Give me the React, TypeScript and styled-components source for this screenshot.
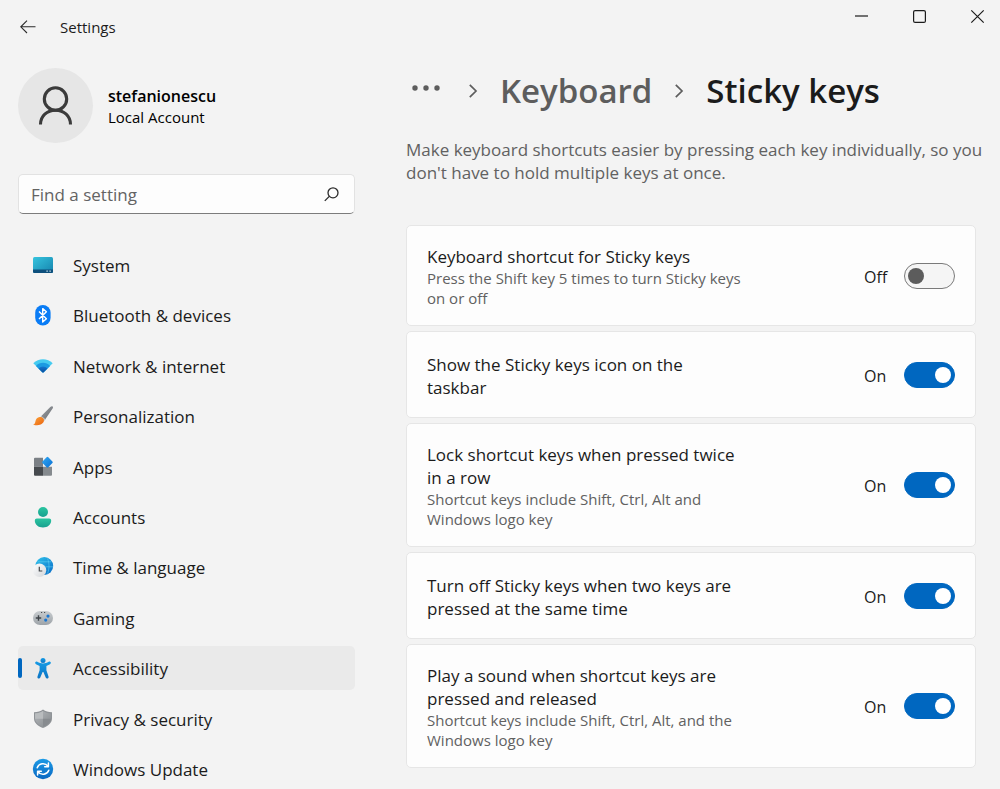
import React from 'react';
import styled, { createGlobalStyle } from 'styled-components';

const GlobalStyle = createGlobalStyle`
  *, *::before, *::after { box-sizing: border-box; }
  body {
    margin: 0;
    background: #f3f3f3;
    color: #1b1b1b;
    font-family: "Open Sans", "Noto Sans", sans-serif;
    font-size: 17px;
  }
  button, input { font: inherit; color: inherit; }
`;

const Window = styled.div`
  display: flex;
  flex-direction: column;
  height: 100vh;
  overflow: hidden;
`;

const TitleBar = styled.header`
  display: flex;
  justify-content: space-between;
  height: 56px;
  flex: none;
`;

const TitleGroup = styled.div`
  display: flex;
  align-items: center;
  gap: 16px;
  height: 54px;
  padding-left: 12px;
`;

const AppTitle = styled.span`
  font-size: 15px;
  line-height: 20px;
`;

const IconButton = styled.button<{ $width: number; $height: number }>`
  display: flex;
  align-items: center;
  justify-content: center;
  width: ${(p) => p.$width}px;
  height: ${(p) => p.$height}px;
  padding: 0;
  border: 0;
  border-radius: 4px;
  background: transparent;
`;

const WindowControls = styled.div`
  display: flex;
  margin-right: -6px;
`;

const Body = styled.div`
  display: grid;
  grid-template-columns: 337px minmax(0, 1fr);
  column-gap: 51px;
  flex: 1;
  min-height: 0;
  padding: 0 8px 0 18px;
`;

const Column = styled.div`
  overflow-y: auto;
  scrollbar-width: none;
`;

const Profile = styled.div`
  display: flex;
  align-items: center;
  gap: 15px;
  margin-top: 12px;
`;

const Avatar = styled.div`
  display: flex;
  align-items: center;
  justify-content: center;
  width: 75px;
  height: 75px;
  border-radius: 50%;
  background: #e6e6e6;
`;

const UserName = styled.div`
  color: #000;
  font-size: 16px;
  font-weight: 600;
  line-height: 22px;
`;

const UserKind = styled.div`
  color: #000;
  font-size: 15px;
  line-height: 20px;
`;

const SearchBox = styled.label`
  display: flex;
  align-items: center;
  height: 40px;
  margin-top: 31px;
  padding: 0 15px 0 12px;
  border: 1px solid #e2e2e2;
  border-bottom-color: #7c7c7c;
  border-radius: 5px;
  background: #fdfdfd;
`;

const SearchInput = styled.input`
  flex: 1;
  min-width: 0;
  padding: 2px 0 0;
  border: 0;
  outline: 0;
  background: transparent;
  line-height: 24px;
  &::placeholder { color: #636363; opacity: 1; }
`;

const NavList = styled.ul`
  display: flex;
  flex-direction: column;
  justify-content: space-between;
  min-height: 548px;
  margin: 29px 0 0;
  padding: 0;
  list-style: none;
`;

const NavLink = styled.a<{ $active?: boolean }>`
  position: relative;
  display: flex;
  align-items: center;
  gap: 20px;
  height: 44px;
  padding: 2px 0 0 15px;
  border-radius: 5px;
  background: ${(p) => (p.$active ? '#eaeaea' : 'transparent')};
  color: #1b1b1b;
  line-height: 24px;
  text-decoration: none;
  &::before {
    content: "";
    display: ${(p) => (p.$active ? 'block' : 'none')};
    position: absolute;
    left: 0;
    top: 12px;
    width: 4px;
    height: 20px;
    border-radius: 2px;
    background: #0067c0;
  }
`;

const Breadcrumb = styled.nav`
  display: flex;
  align-items: center;
  height: 48px;
  margin-top: 11px;
  font-size: 33px;
  font-weight: 600;
  line-height: 48px;
  white-space: nowrap;
`;

const CrumbLink = styled.a`
  color: #5d5d5d;
  text-decoration: none;
`;

const PageTitle = styled.h1`
  margin: 0;
  font-size: inherit;
  font-weight: inherit;
`;

const Separator = styled.span`
  display: flex;
  align-items: center;
  justify-content: center;
  width: 54px;
`;

const Intro = styled.p`
  margin: 23px 0 0;
  color: #616161;
  line-height: 23px;
`;

const Cards = styled.div`
  display: flex;
  flex-direction: column;
  gap: 5px;
  margin: 41px 16px 0 0;
  padding-bottom: 20px;
`;

const Card = styled.div`
  display: flex;
  align-items: center;
  justify-content: space-between;
  min-height: 87px;
  padding: 0 20px;
  border: 1px solid #e6e6e6;
  border-radius: 5px;
  background: #fdfdfd;
`;

const CardText = styled.label`
  display: block;
  max-width: 316px;
  padding: 19px 0 17px;
`;

const CardTitle = styled.span`
  display: block;
  line-height: 23px;
`;

const CardNote = styled.span`
  display: block;
  color: #616161;
  font-size: 15px;
  line-height: 20px;
`;

const Control = styled.div`
  display: flex;
  align-items: center;
`;

const State = styled.span`
  width: 40px;
  padding-top: 2px;
  font-size: 16px;
  line-height: 24px;
`;

const Switch = styled.input`
  appearance: none;
  display: flex;
  align-items: center;
  width: 51px;
  height: 26px;
  margin: 0;
  padding: 0 3px;
  border: 1px solid #7a7a7a;
  border-radius: 13px;
  background: #f5f5f5;
  &::before {
    content: "";
    width: 16px;
    height: 16px;
    border-radius: 50%;
    background: #5c5c5c;
  }
  &:checked {
    justify-content: flex-end;
    border-color: #0067c0;
    background: #0067c0;
  }
  &:checked::before { background: #fff; }
`;

const Glyph = styled.svg`
  display: block;
  flex: none;
  overflow: visible;
`;

const gradient = (id: string, from: string, to: string, diagonal = false) => (
  <linearGradient id={id} x1="0" y1="0" x2={diagonal ? '1' : '0'} y2="1">
    <stop offset="0" stopColor={from} />
    <stop offset="1" stopColor={to} />
  </linearGradient>
);

const navItems: { label: string; art: React.ReactNode }[] = [
  {
    label: 'System',
    art: (
      <>
        <defs>{gradient('sys', '#36c4de', '#1583ad', true)}</defs>
        <rect x="0" y="1" width="20" height="16" rx="1.5" fill="url(#sys)" />
        <path d="M0 13.5h20v2a1.5 1.5 0 0 1-1.5 1.5h-17A1.5 1.5 0 0 1 0 15.500z" fill="#0d4f7c" />
        <path d="M13.500 15.200h1.200M16.500 15.200h1.200" stroke="#dff3fb" strokeWidth="1.200" />
      </>
    ),
  },
  {
    label: 'Bluetooth & devices',
    art: (
      <>
        <rect x="2.200" y="-1" width="15.400" height="20.500" rx="7.700" fill="#0a7cf5" />
        <path d="M6 5.500l7.400 7.200-3.700 3.300V2.600l3.700 3.200L6 13" fill="none" stroke="#fff" strokeWidth="1.400" strokeLinejoin="round" />
      </>
    ),
  },
  {
    label: 'Network & internet',
    art: (
      <>
        <defs>{gradient('net', '#1277d2', '#0c4f9c')}</defs>
        <path d="M.3 6.300C5.500.8 14.500.8 19.700 6.300L10.700 15.200a1 1 0 0 1-1.400 0z" fill="#45cbf0" />
        <path d="M2.900 8.900C6.800 4.600 13.200 4.600 17.100 8.900L10.700 15.200a1 1 0 0 1-1.400 0z" fill="#1b9be2" />
        <path d="M5.500 11.500c2.500-2.700 6.500-2.700 9 0L10.700 15.200a1 1 0 0 1-1.400 0z" fill="url(#net)" />
      </>
    ),
  },
  {
    label: 'Personalization',
    art: (
      <>
        <defs>
          {gradient('handle', '#9b9fa3', '#6b6f74', true)}
          {gradient('bristle', '#fba33a', '#ea640f', true)}
        </defs>
        <path d="M19.600-.6c.7.6.4 1.500 0 2.200L12 12.800 7.800 9.500 17.300-.1c.7-.6 1.700-1 2.300-.5z" fill="url(#handle)" />
        <path d="M8.300 8.900l4.200 3.400-1.200 1.600-4.400-3.400z" fill="#c3c7ca" />
        <path d="M6.600 10.100c2.500-.3 4.700 1.500 4.300 3.800-.6 3.300-5.100 4.800-10.900 4.200 2-1 2.100-2.200 2.500-4 .5-2.200 1.900-3.700 4.100-4z" fill="url(#bristle)" />
      </>
    ),
  },
  {
    label: 'Apps',
    art: (
      <>
        <defs>{gradient('diamond', '#32a9f5', '#0a6fd2', true)}</defs>
        <path d="M2-.2h8v9H1v-8a1 1 0 0 1 1-1z" fill="#7b8085" />
        <path d="M1 8.800h9v9H2a1 1 0 0 1-1-1z" fill="#464a4e" />
        <path d="M10 8.800h9v8a1 1 0 0 1-1 1h-8z" fill="#858a8e" />
        <path d="M13.600-.7a1.200 1.200 0 0 1 1.700 0l4.100 4.100a1.200 1.200 0 0 1 0 1.700l-4.100 4.100a1.200 1.200 0 0 1-1.700 0L9.500 5.100a1.200 1.200 0 0 1 0-1.700z" fill="url(#diamond)" />
      </>
    ),
  },
  {
    label: 'Accounts',
    art: (
      <>
        <defs>{gradient('person', '#2bc5a0', '#17a08f')}</defs>
        <circle cx="10" cy="4" r="5" fill="url(#person)" />
        <path d="M3.800 10.500h12.400a2 2 0 0 1 2 2c0 4.200-3.600 7-8.200 7s-8.200-2.800-8.200-7a2 2 0 0 1 2-2z" fill="url(#person)" />
      </>
    ),
  },
  {
    label: 'Time & language',
    art: (
      <>
        <defs>
          {gradient('globe', '#2fc3ec', '#0a6ac6', true)}
          {gradient('clock', '#ffffff', '#d3d6d9', true)}
        </defs>
        <circle cx="11.300" cy="8" r="8.900" fill="url(#globe)" />
        <path d="M4.500 3.800h13.500M14.500.5c2 4.500 2 10.500 0 15M3 8.800h17" fill="none" stroke="#5fd0f4" strokeWidth=".6" />
        <circle cx="6.500" cy="12.200" r="6.700" fill="url(#clock)" />
        <path d="M6.300 8.800v4.200h3" fill="none" stroke="#45494d" strokeWidth="1.200" />
      </>
    ),
  },
  {
    label: 'Gaming',
    art: (
      <>
        <defs>{gradient('pad', '#c9cdd0', '#9da3a8')}</defs>
        <rect x="0" y="2" width="20" height="14" rx="7" fill="url(#pad)" />
        <path d="M2.800 9h5.400M5.500 6.300v5.400" stroke="#3f4449" strokeWidth="1.400" />
        <path d="M8 3.500h1.200M11 3.500h1.200" stroke="#4a4f54" strokeWidth="1" />
        <circle cx="15" cy="7.100" r="1.600" fill="#1976d2" />
        <circle cx="12.700" cy="11.100" r="1.600" fill="#1976d2" />
      </>
    ),
  },
  {
    label: 'Accessibility',
    art: (
      <>
        <defs>{gradient('access', '#159be6', '#0c74c4')}</defs>
        <circle cx="10" cy="1.600" r="2.500" fill="url(#access)" />
        <path d="M2.300 3.300c.4-.8 1.300-.9 2-.5 3.800 2.300 7.600 2.300 11.400 0 .7-.4 1.600-.3 2 .5.400.8 0 1.500-.7 1.900l-3.600 1.900v4.100l2.100 6.300c.3.900-.1 1.700-.9 1.900-.8.300-1.600-.1-1.900-.9L10.400 12.900h-.8L7.300 18.500c-.3.800-1.100 1.200-1.900.9-.8-.2-1.200-1-.9-1.900l2.100-6.300V7.100L3 5.200c-.7-.4-1.100-1.100-.7-1.900z" fill="url(#access)" />
      </>
    ),
  },
  {
    label: 'Privacy & security',
    art: (
      <>
        <defs>{gradient('shield', '#b5b8bb', '#85898d', true)}</defs>
        <path d="M10-.4c2.500 1.800 5.300 2.600 9 2.700v6c0 4.500-3.600 7.700-9 9.700-5.400-2-9-5.200-9-9.700v-6C4.700 2.200 7.500 1.400 10-.4z" fill="#8f9397" />
        <path d="M10 1c2.300 1.500 4.800 2.200 7.900 2.400v4.900c0 3.800-3 6.600-7.900 8.500-4.900-1.900-7.900-4.700-7.900-8.500V3.400C5.200 3.200 7.700 2.500 10 1z" fill="url(#shield)" />
        <path d="M10 1v7.800H2.100V3.400C5.200 3.200 7.700 2.500 10 1z" fill="#b9bcbe" />
        <path d="M10 8.800h7.900C17.800 12.300 14.800 15 10 16.800z" fill="#878b8f" />
      </>
    ),
  },
  {
    label: 'Windows Update',
    art: (
      <>
        <defs>{gradient('update', '#1c9be6', '#0a68c2')}</defs>
        <circle cx="10" cy="9" r="10.200" fill="url(#update)" />
        <path d="M4.200 7.700C5.800 3.200 12 2.200 15 6.200M15.400 3v3.700h-3.700M15.800 10.300C14.200 14.800 8 15.800 5 11.800M4.600 15v-3.700h3.700" fill="none" stroke="#fff" strokeWidth="1.500" strokeLinecap="round" strokeLinejoin="round" />
      </>
    ),
  },
];

const settings = [
  {
    id: 'shortcut',
    title: 'Keyboard shortcut for Sticky keys',
    note: 'Press the Shift key 5 times to turn Sticky keys on or off',
    on: false,
  },
  { id: 'icon', title: 'Show the Sticky keys icon on the taskbar', on: true },
  {
    id: 'lock',
    title: 'Lock shortcut keys when pressed twice in a row',
    note: 'Shortcut keys include Shift, Ctrl, Alt and Windows logo key',
    on: true,
  },
  { id: 'two-keys', title: 'Turn off Sticky keys when two keys are pressed at the same time', on: true },
  {
    id: 'sound',
    title: 'Play a sound when shortcut keys are pressed and released',
    note: 'Shortcut keys include Shift, Ctrl, Alt, and the Windows logo key',
    on: true,
  },
];

function Chevron() {
  return (
    <Separator aria-hidden="true">
      <Glyph width="8" height="14" viewBox="0 0 8 14" fill="none" stroke="#5d5d5d" strokeWidth="1.700">
        <path d="M.8.800 7 7 .8 13.200" />
      </Glyph>
    </Separator>
  );
}

function SettingCard({ id, title, note, on }: { id: string; title: string; note?: string; on: boolean }) {
  const [checked, setChecked] = React.useState(on);
  return (
    <Card>
      <CardText htmlFor={id}>
        <CardTitle>{title}</CardTitle>
        {note && <CardNote>{note}</CardNote>}
      </CardText>
      <Control>
        <State>{checked ? 'On' : 'Off'}</State>
        <Switch
          id={id}
          type="checkbox"
          role="switch"
          checked={checked}
          onChange={(e) => setChecked(e.target.checked)}
        />
      </Control>
    </Card>
  );
}

export default function App() {
  return (
    <Window>
      <GlobalStyle />
      <TitleBar>
        <TitleGroup>
          <IconButton $width={32} $height={32} aria-label="Back">
            <Glyph width="16" height="14" viewBox="0 0 16 14" fill="none" stroke="#2b2b2b" strokeWidth="1.100">
              <path d="M7 .6.800 6.800 7 13M.8 6.800H15.500" />
            </Glyph>
          </IconButton>
          <AppTitle>Settings</AppTitle>
        </TitleGroup>
        <WindowControls>
          <IconButton $width={58} $height={32} aria-label="Minimize">
            <Glyph width="13" height="13" viewBox="0 0 13 13" stroke="#1b1b1b" strokeWidth="1.200">
              <path d="M0 6h13" />
            </Glyph>
          </IconButton>
          <IconButton $width={58} $height={32} aria-label="Maximize">
            <Glyph width="13" height="13" viewBox="0 0 13 13" fill="none" stroke="#1b1b1b" strokeWidth="1.200">
              <rect x=".6" y=".6" width="11.800" height="11.800" rx="1.500" />
            </Glyph>
          </IconButton>
          <IconButton $width={58} $height={32} aria-label="Close">
            <Glyph width="13" height="13" viewBox="0 0 13 13" stroke="#1b1b1b" strokeWidth="1.200">
              <path d="M.3.300l12.400 12.400M12.700.300.3 12.700" />
            </Glyph>
          </IconButton>
        </WindowControls>
      </TitleBar>
      <Body>
        <Column as="aside">
          <Profile>
            <Avatar>
              <Glyph width="34" height="40" viewBox="0 0 34 40" fill="none" stroke="#3b3b3b" strokeWidth="3.100">
                <circle cx="16.500" cy="13" r="11.200" />
                <path d="M1.500 38.500C1.500 30 8 24.200 16.500 24.200S31.500 30 31.500 38.500" />
              </Glyph>
            </Avatar>
            <div>
              <UserName>stefanionescu</UserName>
              <UserKind>Local Account</UserKind>
            </div>
          </Profile>
          <SearchBox>
            <SearchInput type="text" placeholder="Find a setting" aria-label="Find a setting" />
            <Glyph width="15" height="15" viewBox="0 0 15 15" fill="none" stroke="#2b2b2b" strokeWidth="1.300">
              <circle cx="9" cy="5.800" r="5" />
              <path d="M5.300 9.400.8 13.900" />
            </Glyph>
          </SearchBox>
          <nav aria-label="Settings">
            <NavList>
              {navItems.map(({ label, art }) => (
                <li key={label}>
                  <NavLink
                    href="#"
                    $active={label === 'Accessibility'}
                    aria-current={label === 'Accessibility' ? 'page' : undefined}
                  >
                    <Glyph width="20" height="20" viewBox="0 0 20 20" aria-hidden="true">
                      {art}
                    </Glyph>
                    {label}
                  </NavLink>
                </li>
              ))}
            </NavList>
          </nav>
        </Column>
        <Column as="main">
          <Breadcrumb aria-label="Breadcrumb">
            <IconButton $width={40} $height={40} aria-label="More">
              <Glyph width="28" height="6" viewBox="0 0 28 6" fill="#5d5d5d">
                <circle cx="3" cy="0" r="2.700" />
                <circle cx="14" cy="0" r="2.700" />
                <circle cx="25" cy="0" r="2.700" />
              </Glyph>
            </IconButton>
            <Chevron />
            <CrumbLink href="#">Keyboard</CrumbLink>
            <Chevron />
            <PageTitle>Sticky keys</PageTitle>
          </Breadcrumb>
          <Intro>
            Make keyboard shortcuts easier by pressing each key individually, so you don't have to hold multiple keys
            at once.
          </Intro>
          <Cards>
            {settings.map((s) => (
              <SettingCard key={s.id} {...s} />
            ))}
          </Cards>
        </Column>
      </Body>
    </Window>
  );
}
